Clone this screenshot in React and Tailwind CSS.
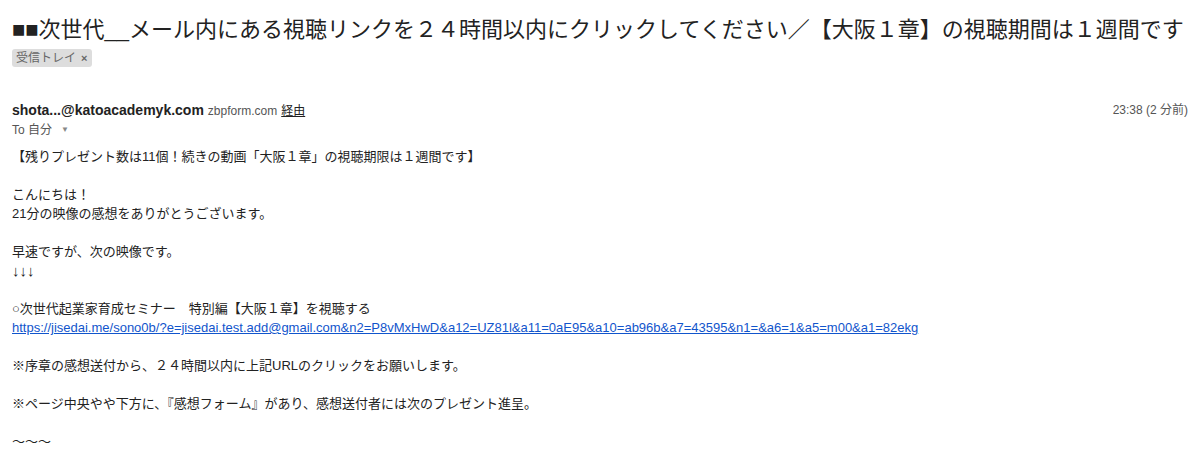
const font = "font-['Arial','Liberation_Sans','Noto_Sans_CJK_JP',sans-serif]";

const url =
  "https://jisedai.me/sono0b/?e=jisedai.test.add@gmail.com&n2=P8vMxHwD&a12=UZ81l&a11=0aE95&a10=ab96b&a7=43595&n1=&a6=1&a5=m00&a1=82ekg";

export default function App() {
  return (
    <div className={`w-[1203px] h-[465px] overflow-hidden bg-white ${font} text-[#222]`}>
      {/* Subject */}
      <div className="pl-3 pt-[17px]">
        <h2 className="text-[22px] leading-[26px] font-normal whitespace-nowrap">
          ■■次世代__メール内にある視聴リンクを２４時間以内にクリックしてください／【大阪１章】の視聴期間は１週間です
        </h2>
        <div className="mt-[6px] inline-flex items-center gap-[5px] rounded-[3px] bg-[#dddddd] pl-[4px] pr-[5px] h-[18px] text-[12px] text-[#666]">
          受信トレイ
          <span className="text-[11px] font-bold text-[#666]">×</span>
        </div>
      </div>

      {/* Sender */}
      <div className="flex justify-between pl-3 pr-[15px] mt-[32px]">
        <div>
          <div className="flex items-baseline gap-1 leading-[18px]">
            <span className="text-[14px] font-bold text-[#222]">shota...@katoacademyk.com</span>
            <span className="text-[12px] text-[#555]">zbpform.com</span>
            <span className="text-[12px] text-[#222] underline">経由</span>
          </div>
          <div className="flex items-center gap-1 mt-[2px] text-[12px] text-[#555] leading-[16px]">
            To 自分
            <span className="ml-[5px] text-[8px] text-[#888]">▼</span>
          </div>
        </div>
        <div className="text-[12px] text-[#555] leading-[18px]">23:38 (2 分前)</div>
      </div>

      {/* Body */}
      <div className="pl-3 mt-[9px] text-[13px] leading-[19px] text-[#222]">
        <p>【残りプレゼント数は11個！続きの動画「大阪１章」の視聴期限は１週間です】</p>
        <br />
        <p>こんにちは！</p>
        <p>21分の映像の感想をありがとうございます。</p>
        <br />
        <p>早速ですが、次の映像です。</p>
        <p className="text-[15px]">↓↓↓</p>
        <br />
        <p>○次世代起業家育成セミナー　特別編【大阪１章】を視聴する</p>
        <p>
          <a href="#" className="text-[#1155cc] underline">
            {url}
          </a>
        </p>
        <br />
        <p>※序章の感想送付から、２４時間以内に上記URLのクリックをお願いします。</p>
        <br />
        <p>※ページ中央やや下方に、『感想フォーム』があり、感想送付者には次のプレゼント進呈。</p>
        <br />
        <p>〜〜〜</p>
      </div>
    </div>
  );
}
